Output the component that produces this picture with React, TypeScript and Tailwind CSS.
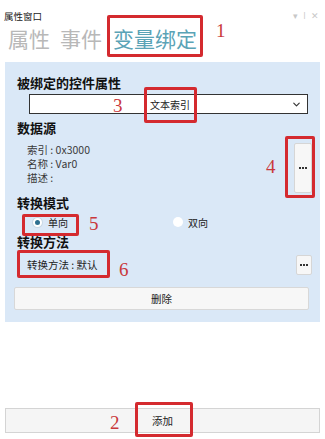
import { ChevronDown } from 'lucide-react'

const cjk = '"Noto Sans CJK SC", "Noto Sans", sans-serif'

function Mark({ className }: { className: string }) {
  // red annotation box drawn over the screenshot
  return <div className={`absolute rounded-[2px] border-[3px] border-[#d42a2f] ${className}`} />
}

function Num({ n, className }: { n: string; className: string }) {
  return (
    <div
      className={`absolute text-[19px] leading-[20px] text-[#c9383c] ${className}`}
      style={{ fontFamily: '"Liberation Serif", serif' }}
    >
      {n}
    </div>
  )
}

function DotsButton({ className }: { className: string }) {
  return (
    <button
      className={`flex shrink-0 items-center justify-center gap-[1px] rounded-[2px] border border-[#d6d6d6] bg-[#f7f7f7] ${className}`}
    >
      <span className="h-[2px] w-[2px] bg-[#333]" />
      <span className="h-[2px] w-[2px] bg-[#333]" />
      <span className="h-[2px] w-[2px] bg-[#333]" />
    </button>
  )
}

export default function App() {
  return (
    <div className="relative h-[439px] w-[325px] overflow-hidden bg-white" style={{ fontFamily: cjk }}>
      {/* header */}
      <div className="flex h-[22px] items-end justify-between pl-[4px] pr-[6px]">
        <span className="text-[9.5px] leading-[12px] text-[#222]">属性窗口</span>
        <span className="flex items-center gap-[5px] text-[9px] leading-[12px] text-[#c8c8c8]">
          <span>▾</span>
          <span>ǀ</span>
          <span>✕</span>
        </span>
      </div>

      {/* tabs */}
      <div className="flex h-[32px] items-center pl-[8px] text-[21px] leading-[28px]">
        <span className="text-[#b8b8b8]">属性</span>
        <span className="ml-[10px] text-[#b8b8b8]">事件</span>
        <span className="ml-[11px] text-[#5aa3b6]">变量绑定</span>
      </div>

      {/* binding panel */}
      <div className="mx-[5px] mt-[8px] bg-[#dae8f7] px-[12px] pb-[12px] pt-[13px]">
        <div className="text-[13px] font-bold leading-[16px] text-[#111]">被绑定的控件属性</div>
        <div className="ml-[12px] mt-[3px] flex h-[20px] items-center justify-between border border-[#333] bg-white pl-[120px] pr-[5px]">
          <span className="text-[10px] text-[#222]">文本索引</span>
          <ChevronDown size={11} strokeWidth={2.5} className="text-[#333]" />
        </div>

        <div className="mt-[6px] text-[13px] font-bold leading-[16px] text-[#111]">数据源</div>
        <div className="mt-[7px] flex justify-between">
          <div className="pl-[10px] text-[10.5px] leading-[14px] text-[#3a3a3a]">
            <div>索引 : 0x3000</div>
            <div>名称 : Var0</div>
            <div>描述 :</div>
          </div>
          <DotsButton className="-mr-[4px] h-[50px] w-[18px]" />
        </div>

        <div className="mt-[2px] text-[13px] font-bold leading-[16px] text-[#111]">转换模式</div>
        <div className="mt-[2px] flex h-[18px] items-center text-[10px] text-[#222]">
          <span className="ml-[16px] flex w-[140px] items-center gap-[6px]">
            <span className="h-[9px] w-[9px] rounded-full border-[2px] border-white bg-[#2d6f90] shadow-[0_0_0_1px_#c9d9e6]" />
            单向
          </span>
          <span className="flex items-center gap-[5px]">
            <span className="h-[10px] w-[10px] rounded-full bg-white" />
            双向
          </span>
        </div>

        <div className="mt-[3px] text-[13px] font-bold leading-[16px] text-[#111]">转换方法</div>
        <div className="mt-[2px] flex h-[26px] items-center justify-between">
          <span className="pl-[10px] text-[10.5px] text-[#222]">转换方法 : 默认</span>
          <DotsButton className="-mr-[4px] h-[20px] w-[16px]" />
        </div>

        <button className="-mx-[3px] mt-[9px] flex h-[23px] w-[calc(100%+4px)] items-center justify-center rounded-[2px] border border-[#d8d8d8] bg-[#f7f7f7] text-[10.5px] text-[#222]">
          删除
        </button>
      </div>

      {/* add button */}
      <div className="mx-[5px] mt-[86px] flex h-[25px] items-center justify-center border border-[#d4d4d4] bg-[#f5f5f5] text-[10.5px] text-[#222]">
        添加
      </div>

      {/* annotations */}
      <Mark className="left-[107px] top-[15px] h-[42px] w-[96px]" />
      <Num n="1" className="left-[216px] top-[21px]" />
      <Mark className="left-[144px] top-[87px] h-[36px] w-[53px]" />
      <Num n="3" className="left-[113px] top-[96px]" />
      <Mark className="left-[285px] top-[136px] h-[62px] w-[30px]" />
      <Num n="4" className="left-[266px] top-[157px]" />
      <Mark className="left-[22px] top-[214px] h-[22px] w-[57px]" />
      <Num n="5" className="left-[89px] top-[214px]" />
      <Mark className="left-[17px] top-[250px] h-[28px] w-[93px]" />
      <Num n="6" className="left-[119px] top-[260px]" />
      <Mark className="left-[135px] top-[402px] h-[35px] w-[58px]" />
      <Num n="2" className="left-[110px] top-[413px]" />
    </div>
  )
}
